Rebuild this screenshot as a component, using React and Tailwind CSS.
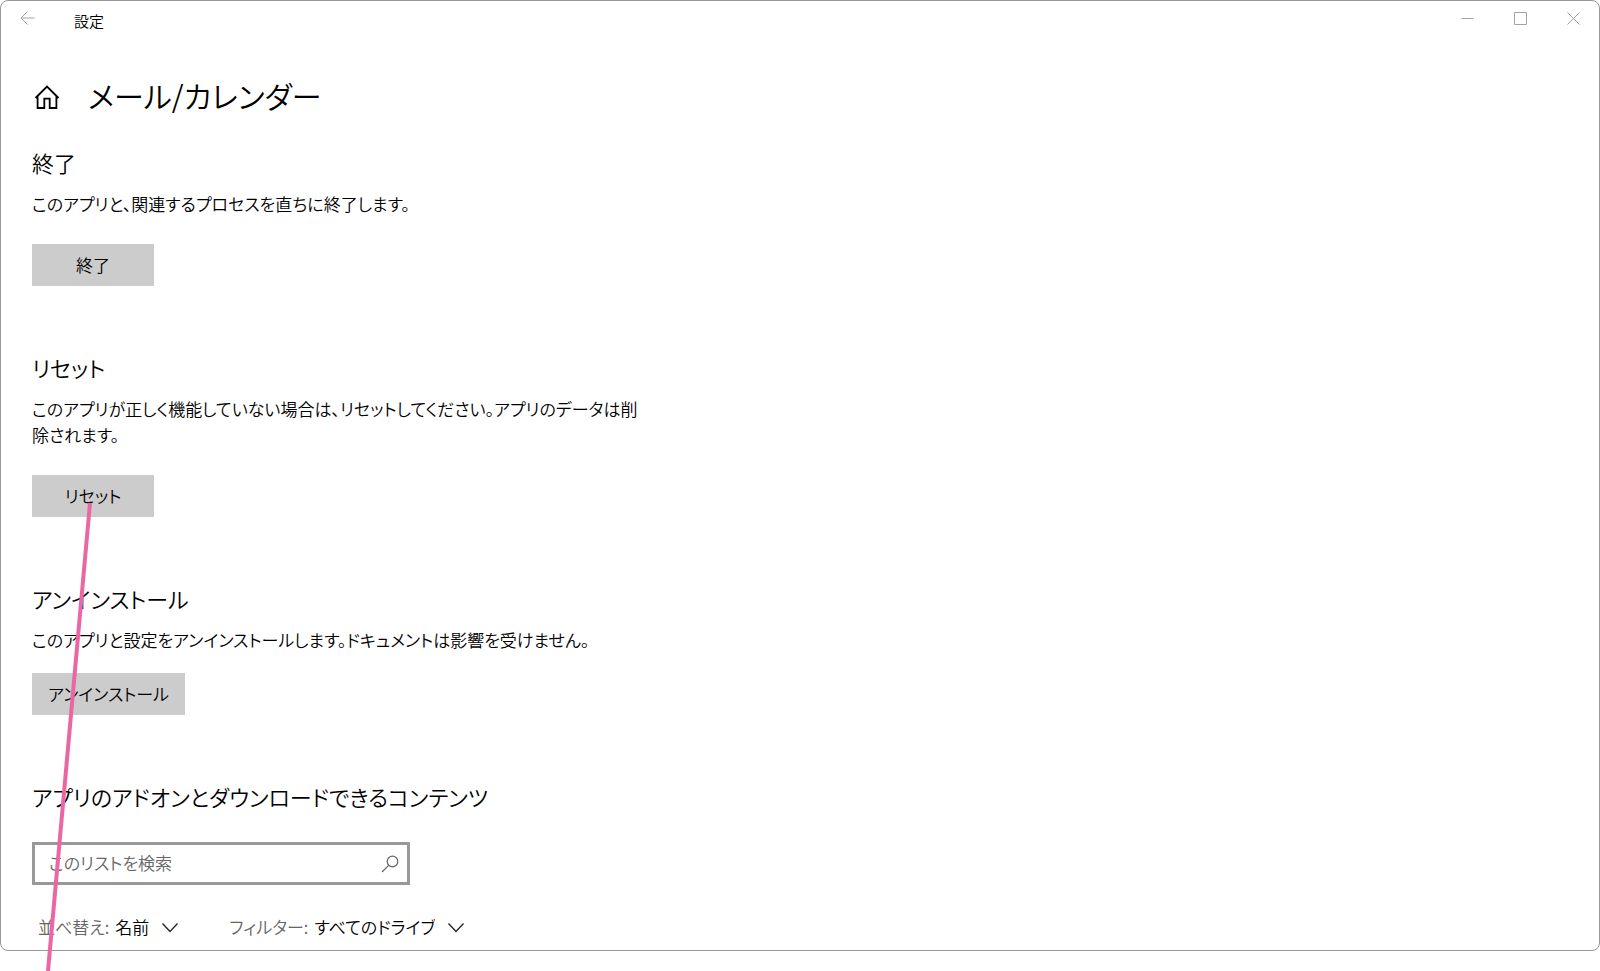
import { useState } from 'react';

const BackIcon = () => (
    <svg width="16" height="16" viewBox="0 0 16 16" fill="none" stroke="#a3a3a3" aria-hidden="true">
        <path d="M15.5 8H2M8.5 1.5L2 8L8.5 14.5" />
    </svg>
);

const HomeIcon = () => (
    <svg width="26" height="26" viewBox="0 0 26 26" fill="none" stroke="#000" strokeWidth="1.8" aria-hidden="true">
        <path d="M1.5 14L13 2.5L24.5 14M3.6 12V24H10.3V14.6H15.7V24H22.4V12" />
    </svg>
);

const SearchIcon = () => (
    <svg width="18" height="18" viewBox="0 0 18 18" fill="none" stroke="#666" strokeWidth="1.2" aria-hidden="true">
        <circle cx="11.5" cy="6.5" r="5.3" />
        <path d="M7.7 10.3L1 17" />
    </svg>
);

const ChevronIcon = () => (
    <svg width="18" height="12" viewBox="0 0 18 12" fill="none" stroke="#222" strokeWidth="1.3" aria-hidden="true" className="pointer-events-none">
        <path d="M1.5 2.5L9 10.5L16.5 2.5" />
    </svg>
);

const TitleBar = () => (
    <header className="flex h-10 items-start justify-between pl-[18px]">
        <div className="flex items-start gap-[39px]">
            <button type="button" aria-label="戻る" className="pt-[9px]">
                <BackIcon />
            </button>
            <span className="pt-2 text-[15px] leading-6">設定</span>
        </div>
        <div className="flex pt-[11px]">
            <button type="button" aria-label="最小化" className="flex w-[53px] justify-center">
                <svg width="13" height="13" viewBox="0 0 13 13" stroke="#a3a3a3">
                    <path d="M0.5 6.5H12.5" />
                </svg>
            </button>
            <button type="button" aria-label="最大化" className="flex w-[53px] justify-center">
                <svg width="13" height="13" viewBox="0 0 13 13" fill="none" stroke="#a3a3a3">
                    <path d="M0.5 0.5H12.5V12.5H0.5Z" />
                </svg>
            </button>
            <button type="button" aria-label="閉じる" className="flex w-[52px] justify-center">
                <svg width="13" height="13" viewBox="0 0 13 13" stroke="#a3a3a3">
                    <path d="M0.5 0.5L12.5 12.5M12.5 0.5L0.5 12.5" />
                </svg>
            </button>
        </div>
    </header>
);

const Heading = ({ children }) => (
    <h2 className="text-[22px] leading-9">{children}</h2>
);

const ActionButton = ({ children }) => (
    <button type="button" className="h-[42px] min-w-[122px] bg-[#ccc] px-4 text-[17px] leading-6">
        {children}
    </button>
);

const Dropdown = ({ id, label, options }) => (
    <div className="flex items-center text-[17px] leading-[26px]">
        <label htmlFor={id} className="text-[#666]">{label}</label>
        <select id={id} className="ml-1.5 mr-3 appearance-none field-sizing-content bg-transparent">
            {options.map((option) => (
                <option key={option}>{option}</option>
            ))}
        </select>
        <ChevronIcon />
    </div>
);

const App = () => {

    const [query, setQuery] = useState('');

    return (
        <div
            lang="ja"
            className="relative min-h-screen bg-white font-['Noto_Sans_CJK_JP',sans-serif] font-[350] text-black [font-feature-settings:'palt','kern']"
        >
            <div className="rounded-lg border border-[#999]">
                <TitleBar />

                <main className="px-[31px] pb-2.5">
                    <div className="flex h-[103px] items-center gap-7">
                        <a href="#home" aria-label="ホーム" className="pt-2 pl-0.5">
                            <HomeIcon />
                        </a>
                        <h1 className="pt-1 text-[30px] leading-[52px]">メール/カレンダー</h1>
                    </div>

                    <section>
                        <Heading>終了</Heading>
                        <p className="mt-[11px] mb-[27px] text-[17px] leading-[26px]">
                            このアプリと、関連するプロセスを直ちに終了します。
                        </p>
                        <ActionButton>終了</ActionButton>
                    </section>

                    <section className="mt-[63px]">
                        <Heading>リセット</Heading>
                        <p className="mt-[11px] mb-[27px] max-w-[616px] text-[17px] leading-[26px]">
                            このアプリが正しく機能していない場合は、リセットしてください。アプリのデータは削除されます。
                        </p>
                        <ActionButton>リセット</ActionButton>
                    </section>

                    <section className="mt-[63px]">
                        <Heading>アンインストール</Heading>
                        <p className="mt-[11px] mb-5 text-[17px] leading-[26px]">
                            このアプリと設定をアンインストールします。ドキュメントは影響を受けません。
                        </p>
                        <ActionButton>アンインストール</ActionButton>
                    </section>

                    <section className="mt-[63px]">
                        <Heading>アプリのアドオンとダウンロードできるコンテンツ</Heading>
                        <div className="mt-7 flex h-[43px] w-[378px] items-center border-[3px] border-[#999] pr-2 pl-[14px]">
                            <input
                                type="text"
                                aria-label="このリストを検索"
                                placeholder="このリストを検索"
                                className="min-w-0 flex-1 pb-0.5 text-[17px] leading-6 outline-none placeholder:text-[#666]"
                                value={query}
                                onChange={(e) => setQuery(e.target.value)}
                            />
                            <button type="button" aria-label="検索">
                                <SearchIcon />
                            </button>
                        </div>
                        <div className="mt-[29px] flex gap-[50px] pl-1.5">
                            <Dropdown id="sort" label="並べ替え:" options={['名前']} />
                            <Dropdown id="filter" label="フィルター:" options={['すべてのドライブ']} />
                        </div>
                    </section>
                </main>
            </div>

            {/* callout line from the reset button down past the window */}
            <svg className="pointer-events-none absolute top-0 left-0 h-full w-[200px]" aria-hidden="true">
                <path d="M90 503L48 971" stroke="#ea66a4" strokeWidth="4" />
            </svg>
        </div>
    )
}

export default App
